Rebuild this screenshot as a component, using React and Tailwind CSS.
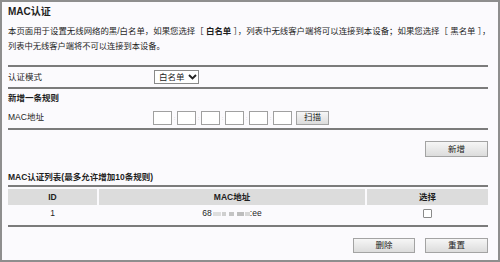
import React from "react";

const FONT = { fontFamily: '"Liberation Sans", "Noto Sans CJK SC", sans-serif' };

function Btn({ children, w = "w-[62px]", h = "h-[16px]" }) {
  return (
    <div
      className={`${w} ${h} flex items-center justify-center border border-[#a3a3a3] bg-gradient-to-b from-[#f6f6f6] to-[#dcdcdc] text-[8.5px] text-[#222]`}
    >
      {children}
    </div>
  );
}

function Divider({ className = "" }) {
  return <div className={`h-[2px] bg-[#7b7b7b] ${className}`} />;
}

export default function App() {
  const boxes = [0, 1, 2, 3, 4, 5];
  return (
    <div
      style={FONT}
      className="w-[500px] h-[262px] overflow-hidden border-2 border-[#8e8e8e] bg-[#fbfafd] pl-[6px] pr-[10px] text-[#1e1e1e]"
    >
      <div className="h-[20px] leading-[20px] text-[10px] font-bold">MAC认证</div>
      <div className="mt-[2px] leading-[15px]">
        <div className="whitespace-nowrap text-[8.42px]">
          本页面用于设置无线网络的黑/白名单，如果您选择［ <span className="font-bold">白名单</span> ］，列表中无线客户端将可以连接到本设备；如果您选择［ 黑名单 ］，
        </div>
        <div className="whitespace-nowrap text-[8.25px]">列表中无线客户端将不可以连接到本设备。</div>
      </div>
      <Divider className="mt-[11px]" />
      <div className="flex h-[20px] items-center text-[8.5px]">
        <div className="w-[146px]">认证模式</div>
        <div className="flex h-[14px] w-[45px] items-center border border-[#8a8a8a] bg-white pl-[4px] text-[8.5px]">
          <span>白名单</span>
          <svg width="9" height="6" viewBox="0 0 9 6" className="ml-[3px]">
            <polyline points="1,1 4.5,4.5 8,1" fill="none" stroke="#222" strokeWidth="1.9" />
          </svg>
        </div>
      </div>
      <Divider />
      <div className="flex h-[19px] items-center text-[8.5px] font-bold">新增一条规则</div>
      <div className="flex h-[19px] items-center text-[8.5px]">
        <div className="w-[145px]">MAC地址</div>
        <div className="flex items-center">
          {boxes.map((i) => (
            <React.Fragment key={i}>
              <div className="h-[14px] w-[19px] border border-[#a0a0a0] bg-white" />
              {i < 5 && (
                <div className="flex w-[5px] justify-center text-[6px] leading-none text-[#bbb]">:</div>
              )}
            </React.Fragment>
          ))}
          <div className="ml-[4px]">
            <Btn w="w-[33px]" h="h-[14px]">扫描</Btn>
          </div>
        </div>
      </div>
      <Divider className="mt-[1px]" />
      <div className="flex justify-end pt-[11px]">
        <Btn w="w-[63px]">新增</Btn>
      </div>
      <div className="mt-[12px] h-[16px] text-[8.5px] font-bold leading-[16px]">
        MAC认证列表(最多允许增加10条规则)
      </div>
      <Divider />
      <div className="mt-[2px] grid h-[16px] grid-cols-[89px_266px_121px] gap-x-[2px] text-[8.5px] font-bold">
        <div className="flex items-center justify-center bg-[#dcdcdc]">ID</div>
        <div className="flex items-center justify-center bg-[#dcdcdc]">MAC地址</div>
        <div className="flex items-center justify-center bg-[#dcdcdc]">选择</div>
      </div>
      <div className="grid h-[17px] grid-cols-[89px_266px_121px] gap-x-[2px] text-[8.5px]">
        <div className="flex items-center justify-center">1</div>
        <div className="flex items-center justify-center">
          <span>68</span>
          <span className="ml-[1px] flex items-center gap-[1px] blur-[0.6px]">
            <span className="h-[4px] w-[8px] bg-[#dedede]" />
            <span className="h-[4px] w-[4px] bg-[#cfcfcf]" />
            <span className="ml-[2px] h-[4px] w-[5px] bg-[#c4c4c4]" />
            <span className="ml-[2px] h-[4px] w-[7px] bg-[#bdbdbd]" />
            <span className="h-[4px] w-[5px] bg-[#d6d6d6]" />
          </span>
          <span>:ee</span>
        </div>
        <div className="flex items-center justify-center">
          <div className="h-[9px] w-[9px] rounded-[1px] border border-[#8a8a8a] bg-white" />
        </div>
      </div>
      <Divider className="mt-[3px]" />
      <div className="mt-[11px] flex justify-end gap-[10px]">
        <Btn w="w-[62px]" h="h-[15px]">删除</Btn>
        <Btn w="w-[63px]" h="h-[15px]">重置</Btn>
      </div>
    </div>
  );
}
